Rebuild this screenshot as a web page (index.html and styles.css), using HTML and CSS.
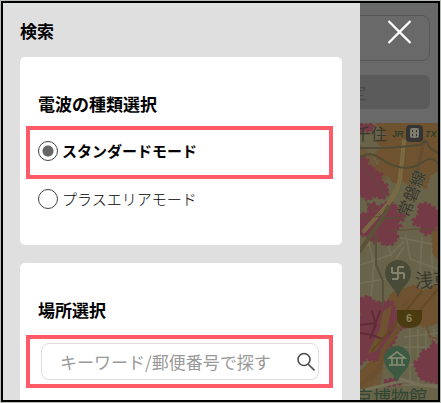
FILE: index.html
```html
<!DOCTYPE html>
<html lang="ja">
<head>
    <meta charset="UTF-8">
    <meta name="viewport" content="width=device-width, initial-scale=1.0">
    <title>検索</title>
    <link rel="stylesheet" href="styles.css">
</head>
<body>
    <div class="screen">
        <div class="page">
            <div class="page-header">
                <input type="text" class="page-search" aria-label="地図を検索">
                <button type="button" class="page-button">設定</button>
            </div>
            <svg class="map" viewBox="0 0 78 277" preserveAspectRatio="xMaxYMin slice" role="img" aria-label="エリアマップ">
                <rect width="78" height="277" fill="#69634a"/>

                <!-- streets -->
                <g fill="none" stroke="#747058" stroke-width="1.5">
                    <path d="M0 128L20 110L46 116L78 122M8 118L14 140L10 190M0 142L30 132L44 118M24 112L32 134M46 112L50 136L78 146M62 114L60 150M0 160L26 156M50 168L78 160M72 120V150M2 185L30 178M44 124L36 136"/>
                    <path d="M44 214L78 210M44 224H78M50 206V262M58 206V262M66 208V240M74 206V230M42 240L64 244M0 262H78"/>
                </g>

                <!-- orange area -->
                <g fill="#6f5330" stroke="#6f5330" stroke-width="2" stroke-dasharray="3 2">
                    <path d="M16 0H78V48L70 52L66 66L58 60L52 66L44 58L34 60L28 52L18 54L14 46L20 40L14 32L22 24L16 18L26 12Z"/>
                    <path d="M0 24L10 30L18 44L26 56L20 60L8 48L0 44Z" opacity=".6"/>
                    <path d="M24 182L32 170L44 166L54 162L64 168L78 160V200L64 204L52 198L40 206L30 222L20 244L12 262L2 264L0 250L12 236L22 214Z"/>
                    <path d="M0 180H26V192L0 198Z"/>
                    <path d="M0 248L24 236L20 262L0 270Z" opacity=".7"/>
                    <path d="M72 108L78 102V136L73 130Z"/>
                </g>

                <!-- pink area -->
                <g fill="#743a46" stroke="#743a46" stroke-width="3" stroke-dasharray="3 2">
                    <path d="M0 0L6 2L12 0L14 5L8 9L4 6L0 10Z"/>
                    <path d="M0 38L3 34L8 37L7 44L12 43L16 49L22 51L20 58L27 62L28 71L23 76L14 73L9 77L0 72Z"/>
                    <path d="M8 82L14 80L18 84L26 80L31 79L38 85L45 90L43 97L33 100H0V91L9 90Z"/>
                    <path d="M0 94L10 92L14 98L20 92L30 91L36 98L41 103L35 107L38 114L33 121L24 122L18 117L14 120L9 114L0 112Z"/>
                    <path d="M59 82L66 80L75 85L78 91V101L72 109L66 112L61 108L62 103L54 102L53 97L58 93Z"/>
                    <path d="M0 176L8 173L14 178L12 185L0 188Z"/>
                    <path d="M2 190L10 180L32 178L36 188L46 196L45 204L38 208L34 220L28 226L24 236L16 238L6 236L0 242V196Z"/>
                    <path d="M22 190L32 182L26 212L16 228L8 230L20 206Z" fill="#6f5330" stroke="none"/>
                    <path d="M54 240L59 236L62 228L70 226L73 219L78 222V260L67 258L60 255L57 248Z"/>
                    <path d="M24 258L38 255L40 261L28 263Z"/>
                </g>

                <!-- roads and railways -->
                <g fill="none" stroke-linecap="round">
                    <path d="M44 18L40 56Q36 74 22 88L4 108" stroke="#77704a" stroke-width="4"/>
                    <path d="M44 18L40 56Q36 74 22 88L4 108" stroke="#7d663d" stroke-width="2"/>
                    <path d="M64 18L58 46L52 66" stroke="#654d34" stroke-width="3"/>
                    <path d="M0 34C16 26 20 38 32 42S50 46 58 42S70 32 78 40M0 25H28L60 22L66 18L70 25L78 30" stroke="#514b36" stroke-width="2"/>
                    <path d="M0 40L22 66L26 76M2 74L22 94L44 96L50 88" stroke="#565037" stroke-width="1"/>
                    <path d="M0 128L22 96L28 84" stroke="#5b5238" stroke-width="4"/>
                    <path d="M16 112V142L23 158V182" stroke="#565139" stroke-width="2"/>
                    <path d="M20 98L40 94M0 96L22 93M30 108L56 106L78 107" stroke="#5d4b37" stroke-width="1"/>
                    <path d="M0 210L12 212L22 216L30 208M12 188L16 202L10 216L20 188M0 202L16 200" stroke="#602c37" stroke-width="2"/>
                    <path d="M46 178L38 206L24 226L18 248L0 262" stroke="#6b5030" stroke-width="5"/>
                    <path d="M62 168L36 200L12 228M78 166L58 190" stroke="#624b24" stroke-width="2"/>
                    <path d="M40 256L60 262L78 264M0 268L42 258" stroke="#777158" stroke-width="3"/>
                    <path d="M64 196L70 214L78 216" stroke="#6e5235" stroke-width="2"/>
                </g>

                <!-- station row -->
                <text class="map-label station" x="-5" y="17">千住</text>
                <text class="map-line" x="32" y="14">JR</text>
                <rect x="46" y="2" width="17" height="17" rx="4" fill="#343532"/>
                <rect x="50" y="5" width="9" height="10" rx="2" fill="#7e7c70"/>
                <path d="M52 8H53M56 8H57M52 12H53M56 12H57M51 17L53 15M58 17L56 15" stroke="#343532" stroke-width="2"/>
                <text class="map-line" x="65" y="14">TX</text>
                <text class="map-label railway" x="0" y="0" transform="translate(48 95) rotate(-68)">常磐線</text>

                <!-- temple pin -->
                <path d="M38 175C36 165 25 160 25 150A13 13 0 0 1 51 150C51 160 40 165 38 175Z" fill="#474b37"/>
                <path d="M38 144V156M32 150H44M32 144V150M38 144H44M44 150V156M32 156H38" fill="none" stroke="#85826b" stroke-width="2"/>
                <text class="map-label" x="55" y="164">浅草</text>

                <!-- route badge -->
                <path d="M37 187H62V193Q62 205 49 205Q37 205 37 193Z" fill="#4b3b10"/>
                <text class="route" x="49" y="199">6</text>

                <!-- museum pin -->
                <path d="M37 260C35 251 24 246 24 236A13 13 0 0 1 50 236C50 246 39 251 37 260Z" fill="#3c5a42"/>
                <path d="M29 235L37 229L45 235ZM29 242H45M32 235V241M37 235V241M42 235V241" fill="none" stroke="#8b8f74" stroke-width="1.5"/>
                <text class="map-label place" x="-5" y="281">京博物館</text>
            </svg>
        </div>

        <div class="overlay">
            <div class="drawer">
                <h1 class="drawer-title">検索</h1>

                <section class="card">
                    <h2 class="card-title" id="modeTitle">電波の種類選択</h2>
                    <div role="radiogroup" aria-labelledby="modeTitle">
                        <div class="highlight">
                            <label class="option selected">
                                <input type="radio" name="mode" class="radio" checked>
                                <span>スタンダードモード</span>
                            </label>
                        </div>
                        <label class="option plain">
                            <input type="radio" name="mode" class="radio">
                            <span>プラスエリアモード</span>
                        </label>
                    </div>
                </section>

                <section class="card card-place">
                    <h2 class="card-title">場所選択</h2>
                    <div class="highlight">
                        <div class="search-box">
                            <input type="text" class="search-input" aria-label="場所選択" placeholder="キーワード/郵便番号で探す">
                            <button type="button" class="search-button" aria-label="探す">
                                <svg width="18" height="20" viewBox="0 0 18 20" fill="none" stroke="#4a4a4a" stroke-width="1.6">
                                    <circle cx="7" cy="7.5" r="6"/>
                                    <path d="M11 12L17.5 18.5"/>
                                </svg>
                            </button>
                        </div>
                    </div>
                </section>
            </div>
            <button type="button" class="close" aria-label="閉じる">
                <svg width="26" height="26" viewBox="0 0 26 26" fill="none" stroke="#fff" stroke-width="2.4">
                    <path d="M2.5 2L24.5 24M24.5 2L2.5 24"/>
                </svg>
            </button>
        </div>
    </div>
</body>
</html>
```

FILE: styles.css
```css
* {
    box-sizing: border-box;
}

body {
    margin: 0;
    padding: 1px;
    background: #b8beb8;
    color: #000;
    font-family: "Noto Sans CJK JP", sans-serif;
}

button {
    font-family: inherit;
    border: none;
    background: none;
    padding: 0;
    cursor: pointer;
}

h1,
h2 {
    margin: 0;
    font-size: 17px;
    line-height: 24px;
    font-weight: 700;
}

/* page and overlay share one grid cell */
.screen {
    display: grid;
    grid-template: minmax(0, 1fr) / minmax(0, 1fr);
    height: calc(100vh - 2px);
    border: 2px solid #000;
    overflow: hidden;
}

.page,
.overlay {
    grid-area: 1 / 1;
    display: flex;
    min-height: 0;
}

.page {
    flex-direction: column;
    background: #696969;
}

.page-header {
    display: flex;
    flex-direction: column;
    gap: 14px;
    padding: 12px 8px 14px;
}

.page-search {
    width: 100%;
    height: 46px;
    border: 1px solid #575757;
    border-radius: 8px;
    background: #696969;
}

.page-button {
    height: 34px;
    padding-right: 64px;
    border-radius: 6px;
    background: #5b5b5b;
    color: #484848;
    font-size: 16px;
    text-align: right;
}

.map {
    align-self: flex-end;
    flex: 1;
    width: 78px;
    min-height: 0;
}

.map-label {
    font-size: 18px;
    fill: #37382e;
}

.station {
    font-size: 16px;
}

.railway {
    font-size: 16px;
    stroke: #69634a;
    stroke-width: 1px;
    paint-order: stroke;
}

.place {
    fill: #2f4634;
}

.map-line {
    font-family: "Liberation Sans", sans-serif;
    font-size: 9px;
    font-weight: 700;
    font-style: italic;
    fill: #2d3f29;
}

.route {
    font-family: "Liberation Sans", sans-serif;
    font-size: 11px;
    font-weight: 700;
    text-anchor: middle;
    fill: #8b815a;
}

.drawer {
    flex: 1;
    display: flex;
    flex-direction: column;
    min-width: 0;
    padding: 16px 18px 0 17px;
    background: #dfdfdf;
}

.drawer-title {
    margin-bottom: 14px;
}

.card {
    padding: 35px 9px 36px 6px;
    border-radius: 5px;
    background: #fff;
}

.card-place {
    flex: 1;
    margin-top: 18px;
    padding-bottom: 12px;
    border-radius: 5px 5px 0 0;
}

.card-title {
    margin: 0 12px 10px;
}

.card-place .card-title {
    margin-bottom: 13px;
}

.highlight {
    display: flex;
    align-items: center;
    height: 53px;
    padding: 0 10px 3px 8px;
    border: 4px solid #ff5a68;
}

.card-place .highlight {
    padding: 0 10px 0 11px;
}

.option {
    display: flex;
    align-items: center;
    gap: 4px;
    font-size: 15px;
    line-height: 20px;
    cursor: pointer;
}

.plain {
    margin: 10px 12px 0;
    font-weight: 300;
}

.selected {
    font-weight: 700;
}

.radio {
    appearance: none;
    width: 20px;
    height: 20px;
    margin: 0;
    border: 1px solid #444;
    border-radius: 50%;
    background: #fff;
}

.radio:checked {
    background: radial-gradient(circle, #666 5px, #fff 6px);
}

.search-box {
    flex: 1;
    display: flex;
    align-items: center;
    height: 37px;
    padding: 0 3px 0 18px;
    border: 1px solid #ddd;
    border-radius: 8px;
}

.search-input {
    flex: 1;
    min-width: 0;
    padding: 0;
    border: none;
    outline: none;
    background: none;
    color: #000;
    font-family: inherit;
    font-size: 17px;
    line-height: 24px;
}

.search-input::placeholder {
    color: #999;
}

.search-button,
.close {
    display: flex;
}

.overlay .close {
    flex: 0 0 78px;
    align-items: flex-start;
    justify-content: center;
    padding-top: 16px;
}
```
